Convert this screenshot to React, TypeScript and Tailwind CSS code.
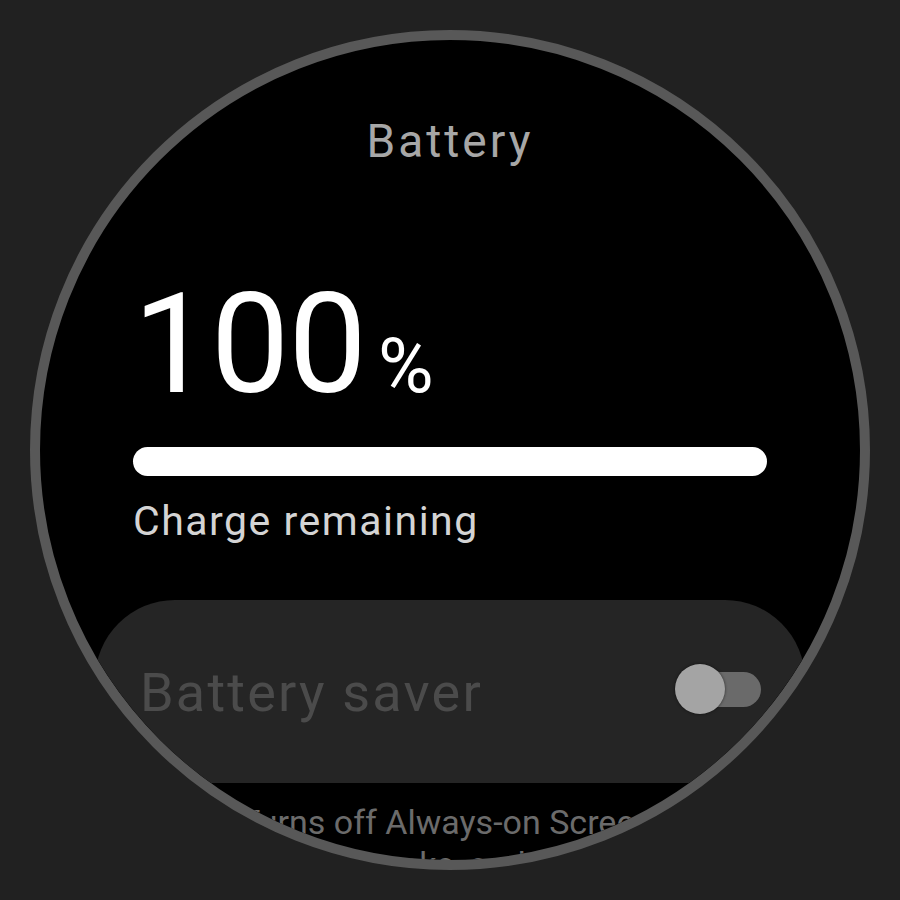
import React from 'react';

const Toggle: React.FC<{ on?: boolean }> = ({ on = false }) => (
  <div className="relative w-[86px] h-[50px] flex items-center shrink-0">
    <div className="absolute right-0 w-[72px] h-[35px] rounded-full bg-[#6a6a6a]" />
    <div
      className={`absolute ${on ? 'right-0' : 'left-0'} w-[50px] h-[50px] rounded-full bg-[#a4a4a4] shadow-[0_0_3px_rgba(0,0,0,0.6)]`}
    />
  </div>
);

export default function App() {
  return (
    <div
      className="w-[900px] h-[900px] bg-[#212121] flex items-center justify-center"
      style={{ fontFamily: 'Roboto, "Noto Sans", sans-serif' }}
    >
      <div className="w-[840px] h-[840px] rounded-full border-[10px] border-[#585858] bg-black overflow-hidden flex flex-col items-center">
        <h1 className="mt-[78px] text-[46px] leading-none text-[#a7a7a7] tracking-[3px] font-normal">Battery</h1>

        <div className="w-[634px] mt-[110px]">
          <div className="text-[140px] leading-none text-white font-normal tracking-[-1px]">
            100<span className="text-[76px] ml-[12px] tracking-normal">%</span>
          </div>
          <div className="mt-[33px] h-[29px] w-full rounded-full bg-white" />
          <p className="mt-[25px] text-[41px] leading-none text-[#d4d4d4] tracking-[1.5px]">Charge remaining</p>
        </div>

        <div className="mt-[58px] w-[710px] h-[183px] shrink-0 bg-[#252525] rounded-t-[80px] flex items-start justify-between pl-[45px] pr-[44px] pt-[66px]">
          <span className="text-[54px] leading-none text-[#4b4b4b] tracking-[2.2px]">Battery saver</span>
          <div className="-mt-[2px]">
            <Toggle />
          </div>
        </div>

        <p className="mt-[18px] w-[470px] text-center text-[34px] leading-[42px] text-[#6b6b6b]">
          Turns off Always-on Screen, tilt-to-wake, and more
        </p>
      </div>
    </div>
  );
}
